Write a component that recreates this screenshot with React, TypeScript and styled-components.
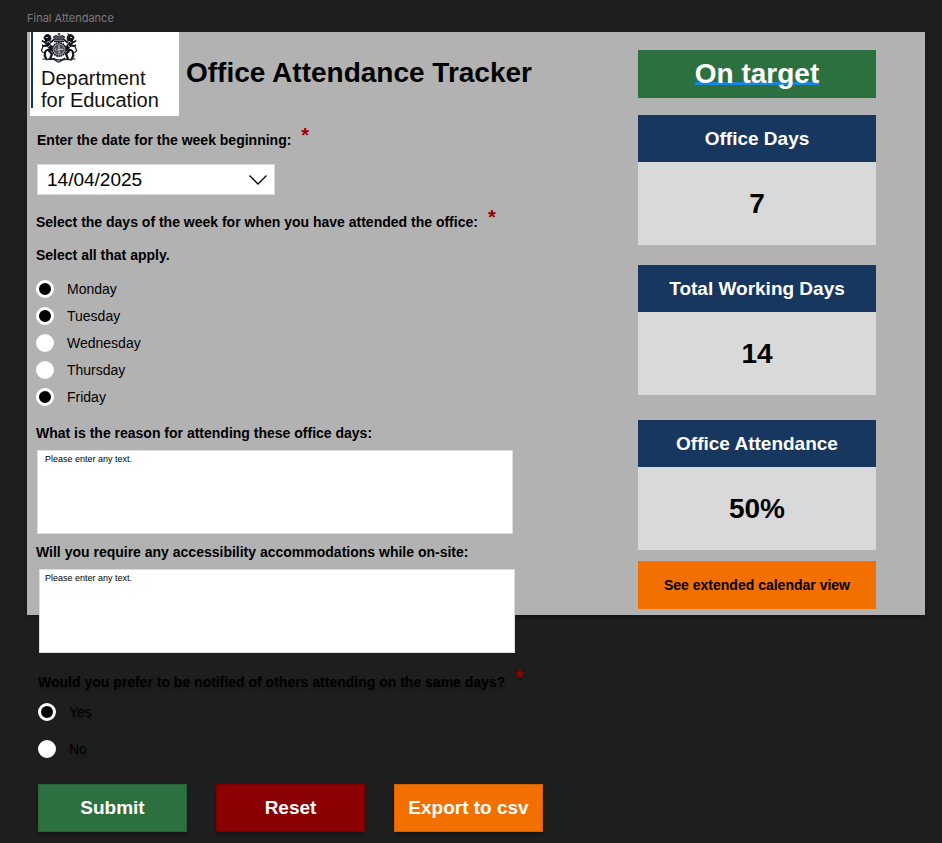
import React from "react";
import styled, { createGlobalStyle, css } from "styled-components";

const colors = {
  canvas: "#1e1e1e",
  panel: "#b2b2b2",
  card: "#d9d9d9",
  navy: "#18375f",
  green: "#2d7040",
  red: "#8b0000",
  orange: "#f26f00",
  link: "#1786dc",
};

const dropShadow = "0 3px 3px rgba(0, 0, 0, 0.25)";

const GlobalStyle = createGlobalStyle`
  *, *::before, *::after { box-sizing: border-box; }
  body {
    margin: 0;
    min-height: 100vh;
    background: ${colors.canvas};
    color: #000;
    font-family: "Liberation Sans", Arial, sans-serif;
    font-size: 14px;
  }
  button, input, select, textarea { font-family: inherit; }
`;

const Canvas = styled.main`
  padding: 10px 17px 12px 27px;
`;

const FrameName = styled.div`
  height: 22px;
  font: 400 11px/16px Inter, sans-serif;
  color: #7b7b7b;
`;

const Board = styled.div`
  display: grid;
  grid-template-columns: minmax(0, 1fr) 238px;
  grid-template-rows: min-content 1fr;
  column-gap: 60px;
  padding-right: 49px;
`;

const Backdrop = styled.div`
  grid-area: 1 / 1 / 2 / -1;
  margin-right: -49px;
  background: ${colors.panel};
  box-shadow: ${dropShadow};
`;

const Form = styled.form`
  grid-area: 1 / 1 / -1 / 2;
  display: flex;
  flex-direction: column;
  min-width: 0;
`;

const Sidebar = styled.aside`
  grid-area: 1 / 2 / 2 / 3;
  display: flex;
  flex-direction: column;
  padding: 18px 0 6px;
`;

const Header = styled.header`
  display: flex;
  align-items: flex-start;
  gap: 7px;
  padding-left: 3px;
`;

const Logo = styled.div`
  width: 149px;
  height: 84px;
  padding-left: 1px;
  background: #fff;
`;

const LogoMark = styled.div`
  display: flex;
  flex-direction: column;
  height: 76px;
  padding: 1px 0 0 8px;
  border-left: 2px solid #10375c;
  svg { flex: none; }
`;

const LogoText = styled.div`
  color: #111;
  margin-top: 4px;
  font-size: 20px;
  line-height: 22px;
  white-space: nowrap;
`;

const Title = styled.h1`
  margin: 24px 0 0;
  font-size: 28px;
  line-height: 34px;
`;

const labelText = css`
  font-size: 14px;
  font-weight: 700;
  line-height: 18px;
`;

const Fields = styled.div`
  display: flex;
  flex-direction: column;
  padding: 15px 0 0 9px;
`;

const Label = styled.label`
  ${labelText}
  display: block;
`;

const Group = styled.fieldset<{ $shadow?: boolean }>`
  margin: 0;
  padding: 0;
  border: 0;
  min-width: 0;
  ${(p) => p.$shadow && "text-shadow: 0 3px 3px rgba(0, 0, 0, 0.25);"}
`;

const Legend = styled.legend`
  ${labelText}
  padding: 0;
`;

const Star = styled.span`
  margin-left: 10px;
  font-size: 20px;
  line-height: 0;
  vertical-align: 3px;
  color: #9b0000;
`;

const Hint = styled.p`
  ${labelText}
  margin: 15px 0 0;
`;

const SelectBox = styled.div`
  position: relative;
  width: 238px;
  margin: 15px 0 18px;
  svg {
    position: absolute;
    right: 7px;
    top: 10px;
    pointer-events: none;
  }
`;

const Select = styled.select`
  appearance: none;
  display: block;
  width: 100%;
  height: 31px;
  padding: 0 30px 0 9px;
  border: 1px solid #ddd;
  border-radius: 0;
  background: #fff;
  color: #000;
  font-size: 19px;
`;

const RadioList = styled.div<{ $gap: number }>`
  display: flex;
  flex-direction: column;
  gap: ${(p) => p.$gap}px;
`;

const Choice = styled.label`
  display: flex;
  align-items: center;
  gap: 13px;
  height: 18px;
  font-size: 14px;
`;

const Dot = styled.input`
  appearance: none;
  width: 18px;
  height: 18px;
  margin: 0;
  border: 3px solid #fff;
  border-radius: 50%;
  background: #fff;
  &:checked { background: #000; }
`;

const TextArea = styled.textarea<{ $inset: number }>`
  display: block;
  width: 476px;
  max-width: 100%;
  height: 84px;
  padding: 2px ${(p) => p.$inset}px;
  border: 1px solid #ddd;
  resize: none;
  background: #fff;
  font-size: 9px;
  line-height: 12px;
  &::placeholder { color: #000; opacity: 1; }
`;

const Actions = styled.div`
  display: flex;
  gap: 29px;
`;

const Button = styled.button<{ $tone: string; $small?: boolean }>`
  width: ${(p) => (p.$small ? "100%" : "149px")};
  height: 48px;
  padding: 0;
  border: ${(p) => (p.$small ? "0" : "1px solid rgba(0, 0, 0, 0.12)")};
  background: ${(p) => p.$tone};
  color: ${(p) => (p.$small ? "#000" : "#fff")};
  font-size: ${(p) => (p.$small ? 14 : 19)}px;
  font-weight: 700;
  white-space: nowrap;
  box-shadow: ${(p) => (p.$small ? "none" : dropShadow)};
`;

const Status = styled.a`
  display: flex;
  align-items: center;
  justify-content: center;
  height: 48px;
  margin-bottom: 17px;
  background: ${colors.green};
  color: #fff;
  font-size: 28px;
  font-weight: 700;
  text-decoration: underline 3px ${colors.link};
  text-underline-offset: -1px;
  text-decoration-skip-ink: none;
`;

const Card = styled.section<{ $after: number }>`
  margin-bottom: ${(p) => p.$after}px;
  background: ${colors.card};
  text-align: center;
`;

const CardTitle = styled.h2`
  margin: 0;
  background: ${colors.navy};
  color: #fff;
  font-size: 19px;
  line-height: 47px;
`;

const CardValue = styled.p`
  margin: 0;
  font-size: 28px;
  font-weight: 700;
  line-height: 83px;
`;

const Spaced = styled.div<{ $top: number; $indent?: number }>`
  margin-top: ${(p) => p.$top}px;
  padding-left: ${(p) => p.$indent ?? 0}px;
`;

const Beast = () => (
  <g fill="none" stroke="#14141f" strokeLinecap="round">
    <path d="M3 4.500Q4 1 7 1.500t3 3.500-2.500 3.500-3.500-1.500z" fill="#14141f" />
    <path d="M6.500 7q-1.500 2.500 1 5t3.500 4.500" strokeWidth="4" />
    <path d="M5 10L1.500 8M7 12.500L2.500 13M9.500 9.500L12.500 7" strokeWidth="1.800" />
    <path d="M9 16.500q-4 0-5 3t1 6M8 18l3 3-2 5" strokeWidth="2.200" />
    <path d="M4 20Q-.5 19 1 16t.5-4M2 26h4M8 26.500h4" strokeWidth="1.200" />
    <path d="M5.500 4.500h1M7.500 8.500l-1.500 1M9 12.500l-1.500 1M6 18.500l1 1" stroke="#fff" strokeWidth=".8" />
  </g>
);

const Crest = () => (
  <svg width="36" height="30" viewBox="0 0 36 30" aria-hidden="true">
    <Beast />
    <g transform="matrix(-1 0 0 1 36 0)"><Beast /></g>
    <path d="M28.500 2.500L26.500 0" stroke="#14141f" />
    <g fill="none" stroke="#23232f">
      <path d="M18 0v3M16.500 1.200h3" strokeWidth="1" />
      <path d="M13.500 7L12.500 3.500Q15 1.500 18 4q3-2.500 5.500-.5L22.500 7z" fill="#55555f" strokeWidth="1" />
      <path d="M13 8.500h10" strokeWidth="1.400" />
      <circle cx="18" cy="16.500" r="6.600" fill="#b0b0b8" strokeWidth="1.800" strokeDasharray="1.800 .5" />
      <circle cx="18" cy="16.500" r="4.600" fill="#6e6e7a" strokeWidth=".8" />
      <path d="M18 12v9M13.500 16.500h9" stroke="#ddd" strokeWidth=".6" />
      <path d="M15 14h2M19 14h2M15 16h2M19 18h2M15.500 19h1.500" strokeWidth=".9" />
      <path d="M5 27q6-2.500 9 0t4 2 4-2 9 0M12 25q3 2 6 2t6-2" strokeWidth="1.300" />
    </g>
  </svg>
);

const Chevron = () => (
  <svg width="20" height="12" viewBox="0 0 20 12" fill="none" stroke="#000" strokeWidth="1.3" aria-hidden="true">
    <path d="M1.500 1.500L10 10l8.500-8.500" />
  </svg>
);

const days = [
  { name: "Monday", on: true },
  { name: "Tuesday", on: true },
  { name: "Wednesday", on: false },
  { name: "Thursday", on: false },
  { name: "Friday", on: true },
];

const stats = [
  { title: "Office Days", value: "7", after: 20 },
  { title: "Total Working Days", value: "14", after: 25 },
  { title: "Office Attendance", value: "50%", after: 11 },
];

export default function App() {
  return (
    <Canvas>
      <GlobalStyle />
      <FrameName>Final Attendance</FrameName>
      <Board>
        <Backdrop />
        <Form onSubmit={(e) => e.preventDefault()}>
          <Header>
            <Logo>
              <LogoMark>
                <Crest />
                <LogoText>Department<br />for Education</LogoText>
              </LogoMark>
            </Logo>
            <Title>Office Attendance Tracker</Title>
          </Header>
          <Fields>
            <Spaced $top={0} $indent={1}>
              <Label htmlFor="week">Enter the date for the week beginning:<Star>*</Star></Label>
              <SelectBox>
                <Select id="week" defaultValue="14/04/2025">
                  <option>14/04/2025</option>
                </Select>
                <Chevron />
              </SelectBox>
            </Spaced>
            <Group>
              <Legend>Select the days of the week for when you have attended the office:<Star>*</Star></Legend>
              <Hint>Select all that apply.</Hint>
              <Spaced $top={16}>
                <RadioList $gap={9}>
                  {days.map((d) => (
                    <Choice key={d.name}>
                      <Dot type="radio" name={`day-${d.name}`} defaultChecked={d.on} />
                      {d.name}
                    </Choice>
                  ))}
                </RadioList>
              </Spaced>
            </Group>
            <Spaced $top={18}>
              <Label htmlFor="reason">What is the reason for attending these office days:</Label>
              <Spaced $top={8} $indent={1}>
                <TextArea id="reason" placeholder="Please enter any text." $inset={7} />
              </Spaced>
            </Spaced>
            <Spaced $top={9}>
              <Label htmlFor="access">Will you require any accessibility accommodations while on-site:</Label>
              <Spaced $top={8} $indent={3}>
                <TextArea id="access" placeholder="Please enter any text." $inset={5} />
              </Spaced>
            </Spaced>
            <Spaced $top={20} $indent={2}>
              <Group $shadow>
                <Legend>Would you prefer to be notified of others attending on the same days?<Star>*</Star></Legend>
                <Spaced $top={12}>
                  <RadioList $gap={19}>
                    <Choice><Dot type="radio" name="notify" defaultChecked />Yes</Choice>
                    <Choice><Dot type="radio" name="notify" />No</Choice>
                  </RadioList>
                </Spaced>
              </Group>
            </Spaced>
            <Spaced $top={26} $indent={2}>
              <Actions>
                <Button type="submit" $tone={colors.green}>Submit</Button>
                <Button type="reset" $tone={colors.red}>Reset</Button>
                <Button type="button" $tone={colors.orange}>Export to csv</Button>
              </Actions>
            </Spaced>
          </Fields>
        </Form>
        <Sidebar>
          <Status href="#status">On target</Status>
          {stats.map((s) => (
            <Card key={s.title} $after={s.after}>
              <CardTitle>{s.title}</CardTitle>
              <CardValue>{s.value}</CardValue>
            </Card>
          ))}
          <Button type="button" $tone={colors.orange} $small>See extended calendar view</Button>
        </Sidebar>
      </Board>
    </Canvas>
  );
}
